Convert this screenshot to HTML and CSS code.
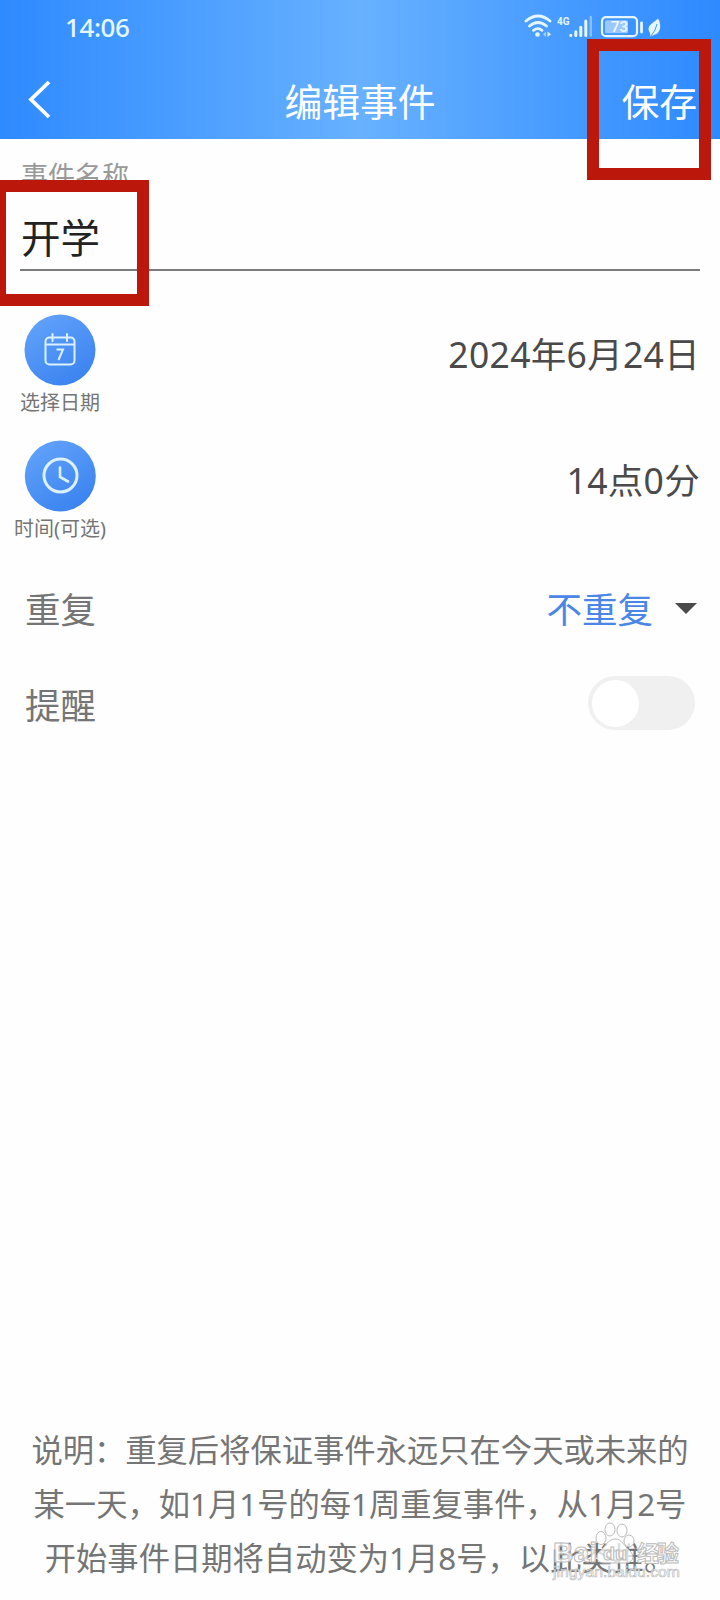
FILE: index.html
```html
<!DOCTYPE html>
<html lang="zh-CN">
  <head>
    <meta charset="utf-8">
    <title>编辑事件</title>
    <link rel="stylesheet" href="styles.css">
  </head>
  <body>
    <div class="screen">

      <header class="header">
        <div class="status-bar">
          <span class="clock">14:06</span>
          <svg class="status-icons" width="140" height="26" viewBox="0 0 140 26">
            <!-- wifi -->
            <g fill="none" stroke="#e6f6ff" stroke-width="2.8" stroke-linecap="round">
              <path d="M2 8 Q14 -2 26 8"/>
              <path d="M5.500 13 Q14 6 22.500 13"/>
              <path d="M9.500 17.300 Q14 14 18 17.300"/>
            </g>
            <circle cx="13.500" cy="21.500" r="2.300" fill="#e6f6ff"/>
            <path d="M23.500 18.500 L27 21.200 L23.500 24z" fill="#e6f6ff"/>
            <path d="M22 18.500 L19 21.200 L22 24z" fill="#a5d0ff"/>
            <!-- signal -->
            <text class="net" x="33" y="12" textLength="12.500" lengthAdjust="spacingAndGlyphs">4G</text>
            <g stroke="#e6f6ff" stroke-width="3" stroke-linecap="round">
              <path d="M46.800 22.300v.2M51.800 18.800v3.700M56.800 14.300v8.200M61.800 8v14.500"/>
              <path d="M66.800 4v18.500" stroke="#8cc0ff" stroke-width="2.400"/>
            </g>
            <!-- battery -->
            <rect x="78" y="4.200" width="35" height="19" rx="4" fill="none" stroke="#e6f6ff" stroke-width="2.200"/>
            <rect x="81" y="7.200" width="23" height="13" rx="1.500" fill="#9bc8ff"/>
            <path d="M117.500 10v9" stroke="#e6f6ff" stroke-width="2.800" stroke-linecap="round"/>
            <text class="level" x="87" y="19.300">73</text>
            <!-- power saving leaf -->
            <path d="M134 5.500 C138 12 137 21 128.500 22.500 L126.500 23.500 L126 20 C121.500 12 130 10 134 5.500z" fill="#e6f6ff"/>
            <path d="M127 23 Q132 17 133 11" fill="none" stroke="#439bff" stroke-width="1"/>
          </svg>
        </div>
        <div class="nav">
          <svg class="back" width="24" height="40" viewBox="0 0 24 40">
            <path d="M21 2 L3 19.500 L21 37" fill="none" stroke="#fff" stroke-width="3.800"/>
          </svg>
          <h1 class="title">编辑事件</h1>
          <span class="save">保存</span>
        </div>
      </header>

      <main class="form">
        <div class="field">
          <label class="field-label">事件名称</label>
          <div class="field-value">开学</div>
        </div>

        <div class="row picker">
          <div class="picker-type">
            <svg width="72" height="72" viewBox="0 0 72 72">
              <defs>
                <linearGradient id="blue" x1="0" y1="0" x2=".6" y2="1">
                  <stop offset="0" stop-color="#65a5fb"/>
                  <stop offset="1" stop-color="#3c84f0"/>
                </linearGradient>
              </defs>
              <circle cx="36" cy="36" r="35.500" fill="url(#blue)"/>
              <g fill="none" stroke="#dcf1ff" stroke-width="2">
                <rect x="21.500" y="23.500" width="29" height="27" rx="4"/>
                <path d="M21.500 30.500h29"/>
                <path d="M28.500 20v7M43 20v7" stroke-linecap="round"/>
                <path d="M32.500 35.500h6.500l-4.500 10.500"/>
              </g>
            </svg>
            <span>选择日期</span>
          </div>
          <div class="picker-value">2024年6月24日</div>
        </div>

        <div class="row picker">
          <div class="picker-type">
            <svg width="72" height="72" viewBox="0 0 72 72">
              <circle cx="36.300" cy="36" r="35.500" fill="url(#blue)"/>
              <g fill="none" stroke="#dcf1ff" stroke-width="3">
                <circle cx="36.500" cy="35.500" r="16.500"/>
                <path d="M36 27.500v9.500l8 4.500" stroke-width="2.600" stroke-linecap="round"/>
              </g>
            </svg>
            <span>时间(可选)</span>
          </div>
          <div class="picker-value">14点0分</div>
        </div>

        <div class="row option">
          <span>重复</span>
          <div class="select">不重复<i class="caret"></i></div>
        </div>

        <div class="row option">
          <span>提醒</span>
          <div class="switch"></div>
        </div>
      </main>

      <footer class="note">
        <p>说明：重复后将保证事件永远只在今天或未来的</p>
        <p>某一天，如1月1号的每1周重复事件，从1月2号</p>
        <p>开始事件日期将自动变为1月8号，以此类推。</p>
      </footer>

      <svg class="watermark" width="136" height="70" viewBox="0 0 136 70">
        <g class="mark">
          <text x="3" y="41" font-size="28" textLength="44" lengthAdjust="spacingAndGlyphs">Bai</text>
          <ellipse cx="51" cy="17" rx="5" ry="6.500"/>
          <ellipse cx="60" cy="8.500" rx="5" ry="6.500"/>
          <ellipse cx="72" cy="9.500" rx="5" ry="6.500"/>
          <ellipse cx="79" cy="20" rx="5" ry="6"/>
          <path d="M65 18 C72 18 74 25 80 30 C86 36 82 42 75 42 L54 42 C47 42 44 35 50 30 C56 25 58 18 65 18z"/>
          <text x="53" y="39" font-size="18" textLength="24" lengthAdjust="spacingAndGlyphs">du</text>
          <text class="cjk" x="87" y="40" font-size="22" textLength="42">经验</text>
          <text class="url" x="3" y="56" font-size="14" textLength="127" lengthAdjust="spacingAndGlyphs">jingyan.baidu.com</text>
        </g>
      </svg>

      <div class="highlight highlight-save"></div>
      <div class="highlight highlight-name"></div>
    </div>
  </body>
</html>
```
FILE: styles.css
```css
* { box-sizing: border-box; }
body { margin: 0; background: #fefefe; font-family: "Noto Sans", "Noto Sans CJK SC", sans-serif; }
.screen { position: relative; height: 1600px; overflow: hidden; display: flex; flex-direction: column; }

.header { height: 139px; background: linear-gradient(90deg, #2e8aff 0%, #67b1ff 50%, #2e8aff 100%); color: #fff; }
.status-bar { height: 53px; padding: 13px 56px 0 65px; display: flex; justify-content: space-between; }
.clock { font-size: 26px; line-height: 29px; font-weight: 500; letter-spacing: -0.4px; color: #e6f8ff; }
.net { font: bold 11px Roboto, sans-serif; fill: #e6f6ff; }
.level { font: 500 15px Roboto, sans-serif; fill: #eef9ff; }
.nav { height: 86px; padding: 0 23px 0 28px; display: grid; grid-template-columns: 1fr auto 1fr; align-items: center; }
.back { margin-top: 7px; }
.title, .save { margin: 12px 0 0; font-size: 37.800px; line-height: 50px; font-weight: 400; }
.title { margin-left: -5px; }
.save { text-align: right; }

.form { flex: 1; }
.field { margin: 0 20px; height: 132px; padding: 21px 1px 0; border-bottom: 2px solid #7b7b7b; }
.field-label { display: block; font-size: 27px; line-height: 32px; color: #999; }
.field-value { margin-top: 20px; font-size: 39.500px; line-height: 52px; color: #222; }

.row { display: flex; justify-content: space-between; }
.picker { height: 126px; padding: 0 20px 0 10px; }
.field + .picker { margin-top: 43px; }
.picker-type { width: 100px; display: flex; flex-direction: column; align-items: center; }
.picker-type span { margin-top: 4px; font-size: 20px; line-height: 26px; color: #757575; white-space: nowrap; }
.picker-value { margin-top: 15px; font-size: 35.500px; line-height: 50px; letter-spacing: 0.3px; color: #4a4a4a; }

.option { height: 96px; padding: 18px 25px 0; font-size: 35.500px; line-height: 50px; color: #757575; }
.select { display: flex; align-items: center; gap: 22px; height: 50px; color: #4a86e6; margin-right: -2px; }
.caret { border: 11px solid transparent; border-top-color: #4a4a4a; border-bottom: 0; margin-top: -2px; }
.switch { width: 107px; height: 54px; margin-top: -4px; padding: 4px; border-radius: 27px; background: #f0f0f0; }
.switch::before { content: ""; display: block; width: 47px; height: 47px; border-radius: 50%; background: #fff; }

.note { height: 177px; text-align: center; font-size: 31.300px; line-height: 54px; color: #757575; white-space: nowrap; }
.note p { margin: 0; }

/* overlays */
.watermark { position: absolute; left: 550px; top: 1521px; }
.mark { fill: #fff; fill-opacity: .75; stroke: #bbb; stroke-width: 1; font-family: "Liberation Sans", sans-serif; font-weight: bold; }
.mark .cjk { font-family: "Noto Sans CJK SC", sans-serif; }
.mark .url { font-weight: 400; stroke-width: .6; }
.highlight { position: absolute; border: 12px solid #bb180b; }
.highlight-save { left: 587px; top: 39px; width: 124px; height: 141px; }
.highlight-name { left: -6px; top: 180px; width: 155px; height: 126px; }
```
